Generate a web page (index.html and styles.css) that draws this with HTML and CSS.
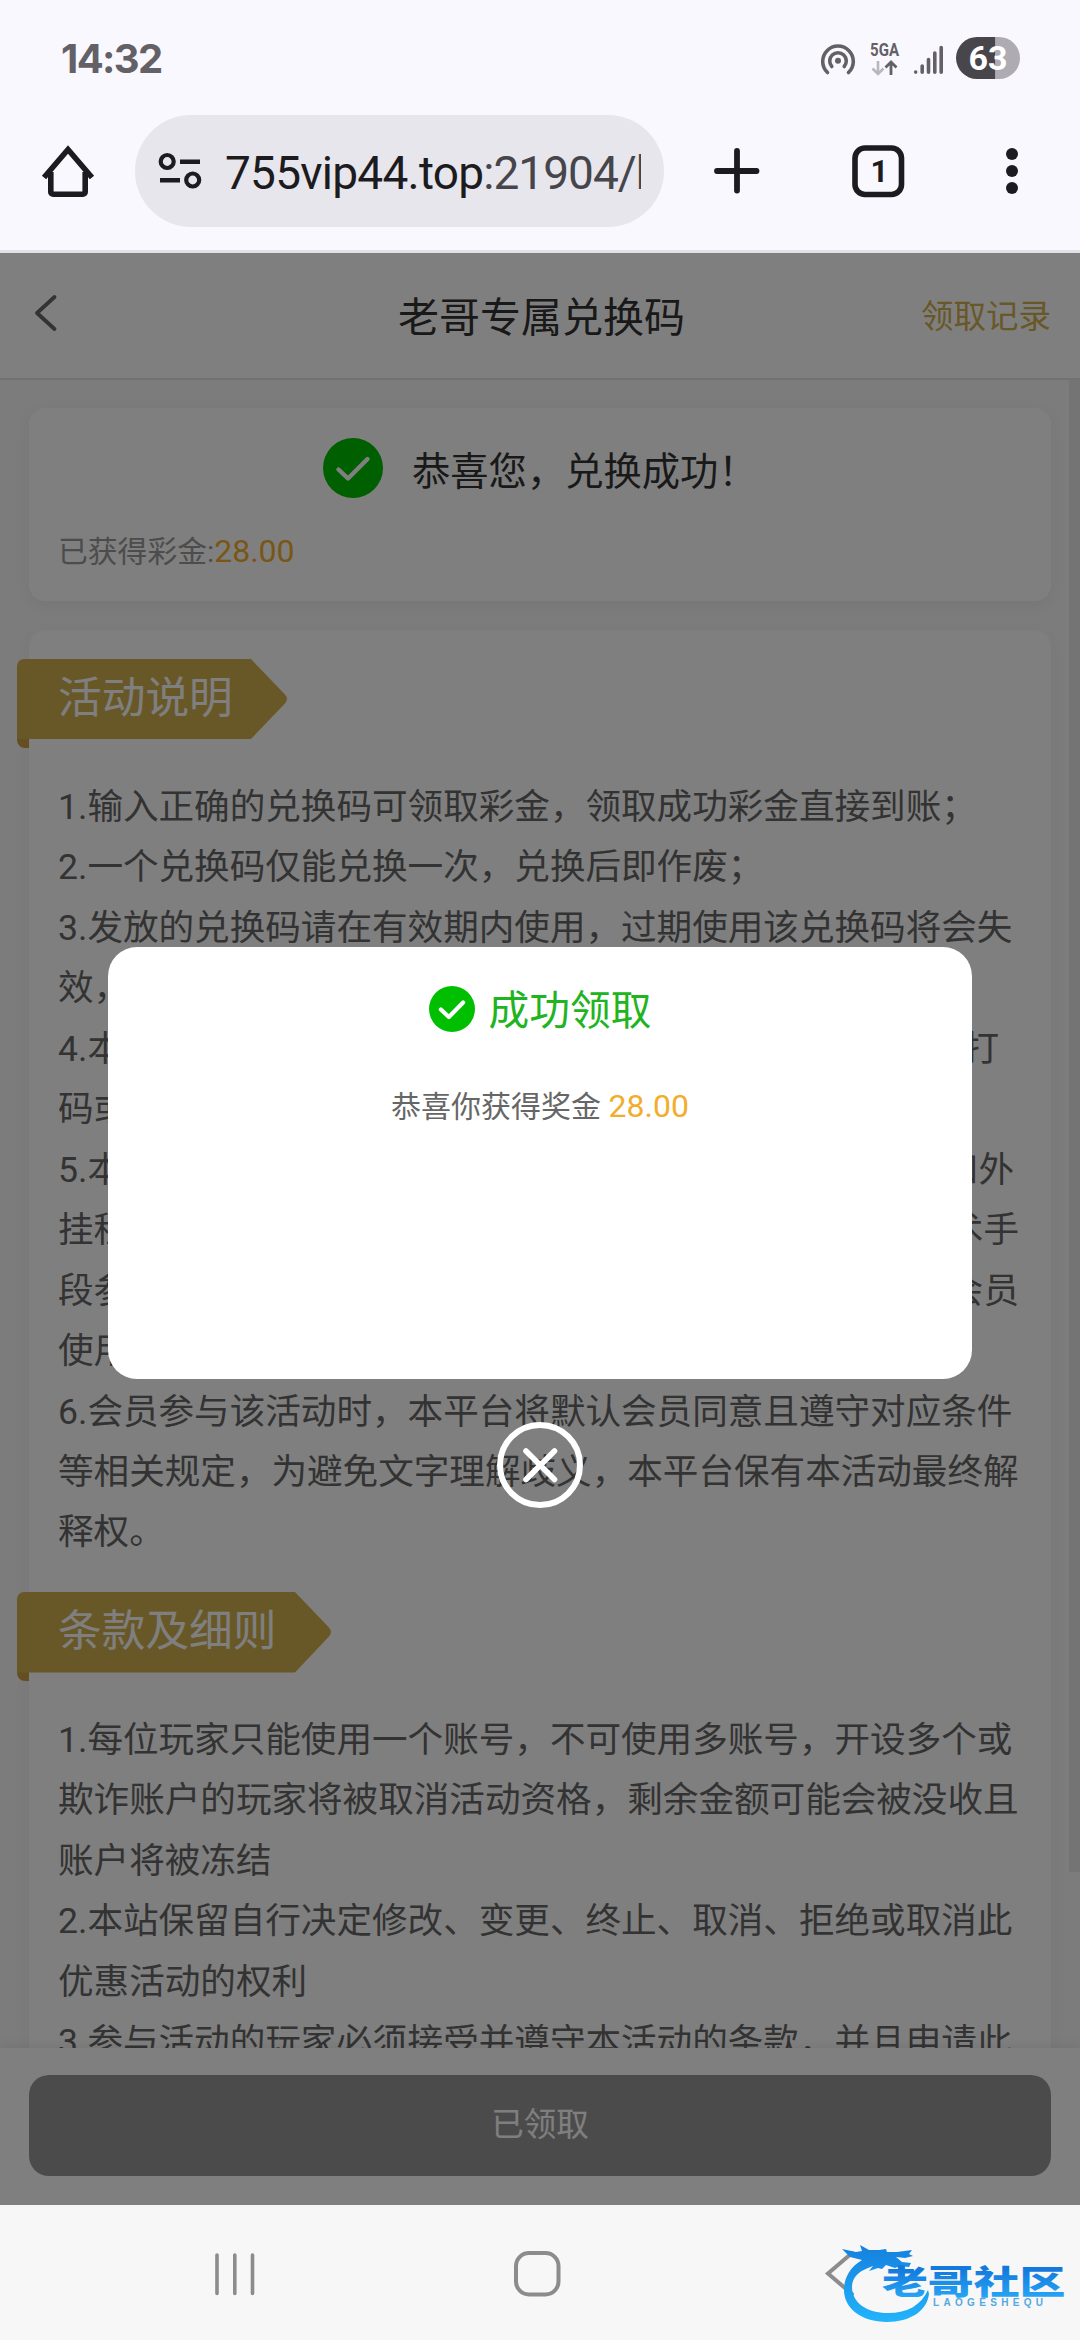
FILE: index.html
```html
<!DOCTYPE html>
<html lang="zh-CN">
<head>
<meta charset="utf-8">
<title>老哥专属兑换码</title>
<link rel="stylesheet" href="styles.css">
</head>
<body>
<div class="phone">
  <div class="status">
    <span class="clock">14:32</span>
    <svg class="status-icons" width="190" height="50" viewBox="835 35 190 50">
      <g fill="none" stroke="#636166" stroke-width="3.6" stroke-linecap="round">
        <path d="M827.5 72.500A15.3 15.3 0 1 1 848.5 72.500"/>
        <path d="M831.8 66.500A8.3 8.3 0 1 1 844.2 66.500"/>
        <circle cx="838" cy="60.700" r="3" fill="#636166" stroke="none"/>
      </g>
      <text class="net" x="870" y="55.800" textLength="29" lengthAdjust="spacingAndGlyphs">5GA</text>
      <path d="M878 61v13M872.500 68.500l5.500 5.500 5.500-5.500" fill="none" stroke="#b9b6bd" stroke-width="2.600"/>
      <path d="M891 75V62M885.500 67.500L891 62l5.500 5.500" fill="none" stroke="#636166" stroke-width="2.800"/>
      <g stroke="#636166" stroke-width="3.600" stroke-linecap="round">
        <path d="M915.700 72v.1M922.200 66v6.300M928.500 59.500v12.800M934.800 53v19.300M941.200 47.500v24.800"/>
      </g>
      <path d="M977 37h18.500v42H977a21 21 0 0 1 0-42z" fill="#48464a"/>
      <path d="M995.500 37h3.500a21 21 0 0 1 0 42h-3.500z" fill="#aeabb2"/>
      <text class="battery" x="988" y="69.700" text-anchor="middle">63</text>
    </svg>
  </div>

  <div class="toolbar">
    <svg class="home" width="56" height="60" viewBox="40 141 56 60" fill="none" stroke="#1c1b20" stroke-width="5.600">
      <path d="M44 177.500L68 149.500l24 28M50.800 172v20a2.300 2.300 0 0 0 2.300 2.300h29.800a2.300 2.300 0 0 0 2.300-2.300V172"/>
    </svg>
    <div class="omnibox">
      <svg width="46" height="40" viewBox="157 151 46 40" fill="none" stroke="#1c1b20">
        <circle cx="167.200" cy="161.500" r="6.500" stroke-width="4.200"/>
        <circle cx="192.700" cy="180" r="6.500" stroke-width="4.200"/>
        <path d="M180 161.700h20M160 180.300h20" stroke-width="4.600"/>
      </svg>
      <div class="url">755vip44.top<span>:21904/h</span></div>
    </div>
    <svg class="tools" width="316" height="60" viewBox="710 141 316 60" fill="none" stroke="#1c1b20" stroke-linecap="round">
      <path d="M737 151v39.500M717 171h39.500" stroke-width="5.800"/>
      <rect x="855" y="148" width="46.500" height="46.500" rx="10" stroke-width="5.600"/>
      <text class="tabs" x="879.500" y="182" text-anchor="middle">1</text>
      <g fill="#1c1b20" stroke="none"><circle cx="1012" cy="154" r="6"/><circle cx="1012" cy="171" r="6"/><circle cx="1012" cy="188" r="6"/></g>
    </svg>
  </div>

  <main class="page">
    <header class="head">
      <svg width="28" height="40" viewBox="0 0 28 40" fill="none" stroke="#666" stroke-width="3.800" stroke-linecap="round" stroke-linejoin="round"><path d="M21.500 5L4 21l17.500 16"/></svg>
      <h1>老哥专属兑换码</h1>
      <a>领取记录</a>
    </header>

    <div class="scroll">
      <div class="column">
        <section class="card result">
          <div class="ok">
            <svg width="60" height="60" viewBox="0 0 60 60"><circle cx="30" cy="30" r="30" fill="#00bf00"/><path d="M15.500 31.500l9.500 9 19.500-19.500" fill="none" stroke="#fff" stroke-width="4.400" stroke-linecap="round" stroke-linejoin="round"/></svg>
            <span>恭喜您，兑换成功！</span>
          </div>
          <p class="bonus">已获得彩金:<b>28.00</b></p>
        </section>

        <section class="card rules">
          <h2 class="tag">
            <svg width="272" height="90" viewBox="0 0 272 90"><path d="M0 78h12v11H8a8 8 0 0 1-8-8z" fill="#ca9d42"/><path d="M7 0H234L268 35.500q4 4.500 0 9L234 80H12H0V7a7 7 0 0 1 7-7z" fill="#d2b04e"/></svg>
            <span>活动说明</span>
          </h2>
          <div class="text">
            <p>1.输入正确的兑换码可领取彩金，领取成功彩金直接到账；</p>
            <p>2.一个兑换码仅能兑换一次，兑换后即作废；</p>
            <p>3.发放的兑换码请在有效期内使用，过期使用该兑换码将会失</p>
            <p>效，</p>
            <p class="split short"><span>4.本</span><span>打</span></p>
            <p>码或</p>
            <p class="split item"><span>5.本</span><span>和外</span></p>
            <p class="split"><span>挂程</span><span>术手</span></p>
            <p class="split"><span>段参</span><span>会员</span></p>
            <p>使用</p>
            <p>6.会员参与该活动时，本平台将默认会员同意且遵守对应条件</p>
            <p>等相关规定，为避免文字理解歧义，本平台保有本活动最终解</p>
            <p>释权。</p>
          </div>
          <h2 class="tag">
            <svg width="316" height="90" viewBox="0 0 316 90"><path d="M0 78h12v11H8a8 8 0 0 1-8-8z" fill="#ca9d42"/><path d="M7 0H278L312 35.500q4 4.500 0 9L278 80.500H12H0V7a7 7 0 0 1 7-7z" fill="#d2b04e"/></svg>
            <span>条款及细则</span>
          </h2>
          <div class="text">
            <p>1.每位玩家只能使用一个账号，不可使用多账号，开设多个或</p>
            <p>欺诈账户的玩家将被取消活动资格，剩余金额可能会被没收且</p>
            <p>账户将被冻结</p>
            <p>2.本站保留自行决定修改、变更、终止、取消、拒绝或取消此</p>
            <p>优惠活动的权利</p>
            <p>3.参与活动的玩家必须接受并遵守本活动的条款，并且申请此</p>
          </div>
        </section>
      </div>
      <div class="scrollbar"></div>
    </div>

    <footer class="foot"><button>已领取</button></footer>

    <div class="overlay">
      <div class="modal">
        <div class="modal-title">
          <svg width="46" height="46" viewBox="0 0 60 60"><circle cx="30" cy="30" r="30" fill="#00bf00"/><path d="M15.500 30.500l10.500 10 18.500-19" fill="none" stroke="#fff" stroke-width="5.400" stroke-linecap="round" stroke-linejoin="round"/></svg>
          <span>成功领取</span>
        </div>
        <p>恭喜你获得奖金 <b>28.00</b></p>
      </div>
      <svg class="close" width="86" height="86" viewBox="0 0 86 86" fill="none" stroke="#fff" stroke-linecap="round"><circle cx="43" cy="43" r="40" stroke-width="6"/><path d="M29 29l28.500 28.500M57.500 29L29 57.500" stroke-width="5.600"/></svg>
    </div>
  </main>

  <nav class="nav">
    <svg width="1080" height="135" viewBox="0 2205 1080 135" fill="none" stroke="#8c8c8c" stroke-linecap="round">
      <path d="M217 2255v38.500M234.800 2255v38.500M252.500 2255v38.500" stroke-width="3.600"/>
      <rect x="516" y="2253" width="42.500" height="41.500" rx="13" stroke-width="4"/>
      <path d="M852 2253l-24 20.500 24 20.500" stroke-width="4"/>
    </svg>
    <svg class="logo" width="260" height="100" viewBox="820 2230 260 100">
      <defs>
        <linearGradient id="ring" x1="0" y1="0" x2="0" y2="1"><stop offset="0" stop-color="#1580de"/><stop offset="1" stop-color="#22b4fb"/></linearGradient>
        <linearGradient id="word" x1="0" y1="0" x2="0" y2="1"><stop offset=".3" stop-color="#1379dc"/><stop offset="1" stop-color="#2aaefa"/></linearGradient>
      </defs>
      <path fill="url(#ring)" d="M842 2249l14 3 6-1-2-6 9 5 10 0 7-1 1 3 10 0 15-2-3 4 4 2-8 2-9-1 6 5 9 1-2 4-9-1-5 2-9-3-4 4-4-1-9 3 4-5-5 2c-11 4-16 11-16 19 0 16 15 26 36 26 20 0 33-8 40-23l1 4c-2 17-19 28-42 28-26 0-43-14-43-32 0-12 6-23 18-30l-12-3z"/>
      <text class="brand" transform="translate(882 2293.500) scale(1.370 1)" fill="url(#word)">老哥社区</text>
      <text class="brand-sub" x="933" y="2306" textLength="110">LAOGESHEQU</text>
    </svg>
  </nav>
</div>
</body>
</html>
```
FILE: styles.css
```css
* { box-sizing: border-box; margin: 0; padding: 0; }
body {
  width: 1080px; height: 2340px; overflow: hidden;
  font-family: Roboto, "Noto Sans CJK SC", sans-serif;
  background: #faf8ff;
}
svg { display: block; flex: none; }
.phone { display: flex; flex-direction: column; width: 1080px; height: 2340px; }

.status { display: flex; justify-content: space-between; height: 100px; padding: 34px 55px 0 61px; }
.clock { font: 700 40px/50px Inter, sans-serif; color: #636166; letter-spacing: -1.6px; }
.status-icons { margin-top: 1px; overflow: visible; }
.net { font: 700 19px Roboto, sans-serif; fill: #636166; }
.battery { font: 700 34px Roboto, sans-serif; fill: #fff; }

.toolbar { display: flex; align-items: center; height: 153px; padding: 0 54px 8px 40px; border-bottom: 3px solid #e3e1e8; }
.omnibox { display: flex; align-items: center; gap: 22px; width: 529px; height: 112px; margin-left: 39px; padding: 0 23px 0 22px; border-radius: 56px; background: #e7e6ec; }
.url { flex: 1; overflow: hidden; white-space: nowrap; padding-top: 3px; font: 400 46px/64px Roboto, sans-serif; letter-spacing: -.75px; color: #1c1b20; }
.url span { color: #45454b; letter-spacing: -1px; }
.tools { margin-left: 46px; }
.tabs { font: 700 31px Roboto, sans-serif; fill: #1c1b20; stroke: none; }

.page { position: relative; display: flex; flex-direction: column; height: 1952px; background: #f8f8f8; }
.head { display: flex; align-items: center; justify-content: space-between; height: 127px; padding: 0 29px 4px 33px; background: #fff; border-bottom: 2px solid #e4e4e4; }
.head svg { margin: 0 101px 4px 0; }
.head h1 { font-size: 41px; font-weight: 400; color: #333; }
.head a { font-size: 32.500px; color: #d2b04e; }

.scroll { display: flex; justify-content: space-between; height: 1668px; overflow: hidden; }
.column { display: flex; flex-direction: column; gap: 29px; width: 1051px; padding: 28px 0 0 29px; }
.scrollbar { width: 11px; height: 1492px; background: #e8e8e8; }
.card { flex: none; background: #fff; border-radius: 16px; box-shadow: 0 4px 16px rgba(0, 0, 0, .05); }
.result { height: 193px; padding: 29px 30px 0 29px; }
.ok { display: flex; align-items: center; gap: 29px; height: 61px; padding-left: 265px; font-size: 38.300px; color: #333; }
.ok span { margin-top: 2px; }
.bonus { margin-top: 31px; font-size: 29.800px; line-height: 44px; color: #999; }
.bonus b, .modal b { font-weight: 400; color: #f2ad2c; }
.bonus b { font-size: 32px; }
.rules { padding: 29px 0 0 29px; }
.tag { display: grid; align-items: start; height: 90px; margin: 0 0 28px -41px; font-weight: 400; }
.tag svg, .tag span { grid-area: 1 / 1; }
.tag span { padding-left: 41px; font-size: 43.700px; line-height: 78px; color: #fff; }
.text { width: 964px; font-size: 35.600px; line-height: 60.450px; color: #666; white-space: nowrap; }
.text + .tag { margin-top: 29px; }
.split { display: flex; justify-content: space-between; padding-right: 3px; }
.short { padding-right: 23px; }
.item { padding-right: 8px; }

.foot { height: 157px; padding: 27px 29px; background: #fff; box-shadow: 0 -2px 10px rgba(0, 0, 0, .08); }
.foot button { display: block; width: 1022px; height: 101px; border: 0; border-radius: 20px; background: #979797; color: #fff; font: 400 32.500px Roboto, "Noto Sans CJK SC", sans-serif; padding-bottom: 8px; }

.overlay { position: absolute; inset: 0; display: flex; flex-direction: column; align-items: center; gap: 43px; padding-top: 694px; background: rgba(0, 0, 0, .5); }
.modal { width: 864px; height: 432px; padding-top: 31px; border-radius: 29px; background: #fff; text-align: center; }
.modal-title { display: flex; align-items: center; justify-content: center; gap: 14px; height: 62px; font-size: 40.700px; color: #21b421; }
.modal-title span { margin-top: -4px; }
.modal p { margin-top: 44px; font-size: 30px; line-height: 44px; color: #666; }
.modal b { font-size: 32px; }

.nav { position: relative; height: 135px; background: #f7f7f7; }
.logo { position: absolute; left: 820px; top: 25px; }
.brand { font: 900 33.500px "Noto Sans CJK SC", sans-serif; }
.brand-sub { font: 700 10px "Liberation Sans", sans-serif; fill: #55a9df; }
```
